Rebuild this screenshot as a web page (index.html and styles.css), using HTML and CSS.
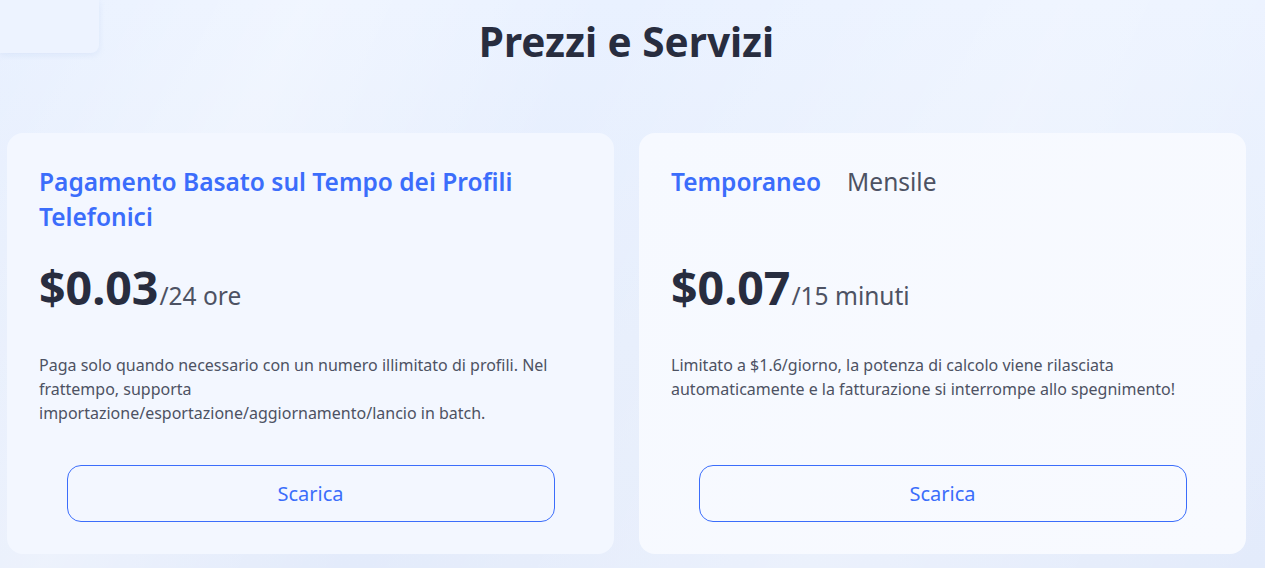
FILE: index.html
```html
<!DOCTYPE html>
<html lang="it">
<head>
<meta charset="utf-8">
<title>Prezzi e Servizi</title>
<link rel="stylesheet" href="styles.css">
</head>
<body>
<div class="corner-box"></div>
<main class="page">
  <h1 class="page-title">Prezzi e Servizi</h1>
  <section class="plans">
    <article class="card card-left">
      <div class="card-head">
        <h2 class="card-title">Pagamento Basato sul Tempo dei Profili Telefonici</h2>
      </div>
      <div class="price"><span class="amount">$0.03</span><span class="unit">/24 ore</span></div>
      <p class="desc">Paga solo quando necessario con un numero illimitato di profili. Nel frattempo, supporta <span class="nowrap">importazione/esportazione/aggiornamento/lancio in batch.</span></p>
      <button class="btn">Scarica</button>
    </article>
    <article class="card card-right">
      <div class="card-head">
        <div class="tabs">
          <span class="tab tab-active">Temporaneo</span>
          <span class="tab">Mensile</span>
        </div>
      </div>
      <div class="price"><span class="amount">$0.07</span><span class="unit">/15 minuti</span></div>
      <p class="desc">Limitato a $1.6/giorno, la potenza di calcolo viene rilasciata automaticamente e la fatturazione si interrompe allo spegnimento!</p>
      <button class="btn">Scarica</button>
    </article>
  </section>
</main>
</body>
</html>
```
FILE: styles.css
```css
* { box-sizing: border-box; }
html, body { margin: 0; padding: 0; }
body {
  width: 1265px;
  height: 568px;
  overflow: hidden;
  font-family: "Noto Sans", "Open Sans", sans-serif;
  color: #282d3f;
  background:
    linear-gradient(115deg, rgba(255,255,255,0) 0%, rgba(255,255,255,0.35) 20%, rgba(255,255,255,0) 40%, rgba(255,255,255,0.3) 70%, rgba(255,255,255,0) 100%),
    linear-gradient(180deg, #e9f1ff 0%, #e5edfc 60%, #e3ebfb 100%);
}
.corner-box {
  position: absolute;
  left: 0;
  top: 0;
  width: 99px;
  height: 53px;
  background: #edf3ff;
  border-bottom-right-radius: 8px;
  box-shadow: 0 2px 6px rgba(150, 175, 225, 0.18);
}
.page {
  width: 1239px;
  margin-left: 7px;
}
.page-title {
  margin: 0;
  height: 133px;
  padding-top: 15px;
  text-align: center;
  font-size: 40.5px;
  line-height: 54px;
  font-weight: 700;
  color: #282d3f;
}
.plans {
  display: grid;
  grid-template-columns: 607px 607px;
  gap: 25px;
}
.card {
  height: 421px;
  border-radius: 16px;
  padding: 31px 32px 32px;
  display: flex;
  flex-direction: column;
}
.card-left { background: #f3f7ff; }
.card-right { background: linear-gradient(135deg, #f6f9ff 0%, #f8faff 100%); }
.card-head {
  height: 72px;
}
.card-title {
  margin: 0;
  font-size: 24.5px;
  line-height: 35px;
  font-weight: 600;
  color: #3b6dfb;
}
.tabs {
  display: flex;
  gap: 26px;
  font-size: 24.5px;
  line-height: 35px;
}
.tab { color: #4d5263; font-weight: 400; }
.tab-active { color: #3b6dfb; font-weight: 600; }
.price {
  margin-top: 21px;
  height: 72px;
  display: flex;
  align-items: baseline;
  color: #4d5263;
}
.amount {
  font-size: 46.5px;
  line-height: 60px;
  font-weight: 700;
  color: #282d3f;
}
.unit {
  font-size: 24.5px;
  margin-left: 1px;
}
.desc {
  margin: 24px 0 0;
  font-size: 16px;
  line-height: 24px;
  color: #4d5263;
}
.nowrap { white-space: nowrap; }
.btn {
  margin: auto auto 0;
  width: 488px;
  height: 57px;
  border: 1px solid #3b6dfb;
  border-radius: 14px;
  background: transparent;
  color: #3b6dfb;
  font-family: inherit;
  font-size: 20px;
  cursor: pointer;
}
```
